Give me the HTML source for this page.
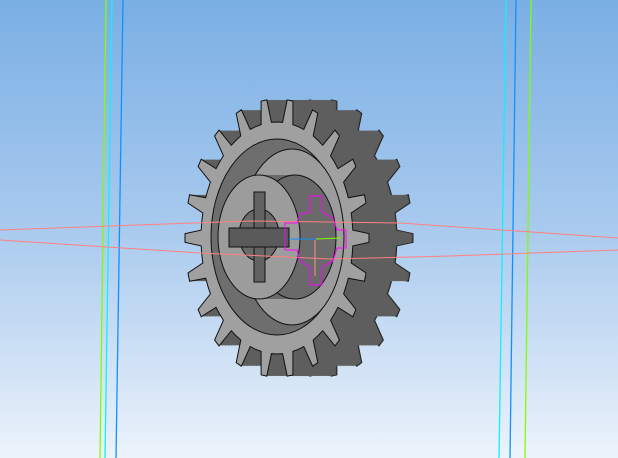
<!DOCTYPE html>
<html><head><meta charset="utf-8"><style>
html,body{margin:0;padding:0;width:618px;height:458px;overflow:hidden}
svg{display:block}
</style></head><body>
<svg id="s" width="618" height="458" viewBox="0 0 618 458" xmlns="http://www.w3.org/2000/svg">
<defs>
<linearGradient id="bg" x1="0" y1="0" x2="0" y2="1">
<stop offset="0" stop-color="#7aafe4"/>
<stop offset="0.5" stop-color="#a9caee"/>
<stop offset="1" stop-color="#ecf3fb"/>
</linearGradient>
</defs>
<rect width="618" height="458" fill="url(#bg)"/>
<g fill="none" stroke-width="1.3">
<line x1="106" y1="0" x2="100" y2="458" stroke="#80ff00"/>
<line x1="112" y1="0" x2="105" y2="458" stroke="#10f0ff"/>
<line x1="123" y1="0" x2="116" y2="458" stroke="#1090ff"/>
<line x1="506" y1="0" x2="499" y2="458" stroke="#10f0ff"/>
<line x1="516" y1="0" x2="510" y2="458" stroke="#1090ff"/>
<line x1="531" y1="0" x2="525" y2="458" stroke="#80ff00"/>
</g>
<g id="gear"></g>
<g fill="none" stroke="#ff8080" stroke-width="1">
<polyline points="0,230 250,221 400,223 618,238"/>
<polyline points="0,240 200,253 330,259 450,256 618,250"/>
</g>
<polygon fill="none" stroke="#ff00ff" stroke-width="1" points="310,196 322,196 322,212 333,218 337,230 346,230 346,248 337,248 333,261 322,267 322,285 310,285 310,267 300,261 297,250 285,250 285,223 297,223 300,214 310,212"/>
<line x1="289" y1="239" x2="316" y2="239" stroke="#1090ff"/>
<line x1="316" y1="239" x2="341" y2="238" stroke="#80ff00"/>
<line x1="315" y1="240" x2="315" y2="276" stroke="#ff9080"/>
</svg>
<script>
var g=document.getElementById('gear'),NS='http://www.w3.org/2000/svg';
function el(t,a){var e=document.createElementNS(NS,t);for(var k in a)e.setAttribute(k,a[k]);g.appendChild(e);return e;}
var cx=277,cy=238,N=22,rt=[92,139],rr=[76,116];
function gearPath(dx){var d='',p=2*Math.PI/N;
for(var i=0;i<N;i++){var a=i*p;
var pts=[[a-0.5*p,rr],[a-0.24*p,rr],[a-0.11*p,rt],[a+0.11*p,rt],[a+0.24*p,rr]];
pts.forEach(function(q,j){var x=cx+dx+q[1][0]*Math.cos(q[0]),y=cy+q[1][1]*Math.sin(q[0]);d+=(i==0&&j==0?'M':'L')+x.toFixed(1)+','+y.toFixed(1);});}
return d+'Z';}
for(var dx=44;dx>0;dx-=1.5){el('path',{d:gearPath(dx),fill:dx>43?'#555':'#5e5e5e',stroke:dx>43?'#222':'none','stroke-width':1});}
el('path',{d:gearPath(0),fill:'#a0a0a0',stroke:'#111','stroke-width':1});
el('ellipse',{cx:277,cy:237,rx:66,ry:98,fill:'#6e6e6e',stroke:'#111'});
el('ellipse',{cx:292,cy:237,rx:52,ry:88,fill:'#9c9c9c',stroke:'#111'});
el('rect',{x:259,y:175,width:36,height:124,fill:'#6a6a6a'});
el('ellipse',{cx:295,cy:237,rx:41,ry:62,fill:'#6a6a6a',stroke:'#111'});
el('ellipse',{cx:259,cy:237,rx:41,ry:62,fill:'#9c9c9c',stroke:'#111'});
el('ellipse',{cx:259,cy:235,rx:20,ry:26,fill:'#6a6a6a',stroke:'#111'});
el('rect',{x:254,y:192,width:11,height:90,fill:'#626262',stroke:'#111'});
el('rect',{x:229,y:228,width:60,height:19,fill:'#5a5a5a',stroke:'#111'});
</script>
</body></html>
